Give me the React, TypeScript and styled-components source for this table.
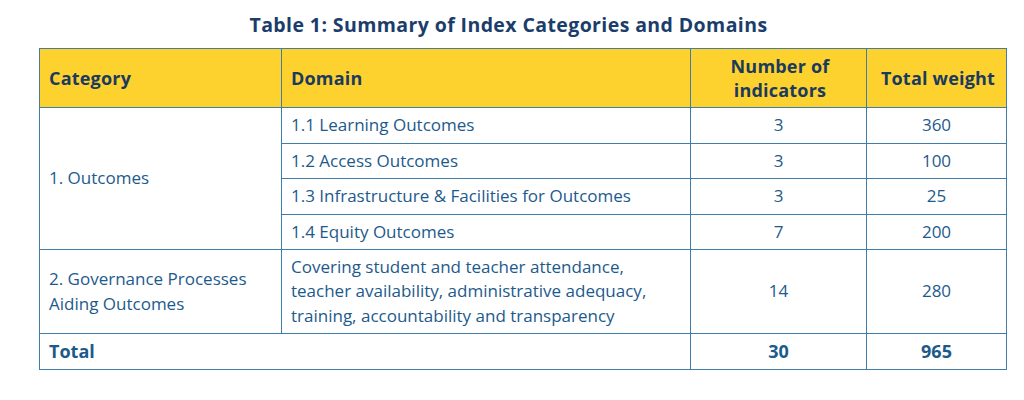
import styled, { createGlobalStyle } from "styled-components";

const GlobalStyle = createGlobalStyle`
  html, body {
    margin: 0;
    padding: 0;
    background: #ffffff;
  }
  body {
    font-family: "Open Sans", "Noto Sans", sans-serif;
  }
`;

const Page = styled.div`
  width: 1024px;
  height: 400px;
  padding: 12px 0 0 39px;
  box-sizing: border-box;
`;

const Caption = styled.div`
  width: 967px;
  padding-right: 28px;
  box-sizing: border-box;
  text-align: center;
  font-size: 19.5px;
  letter-spacing: 0.4px;
  font-weight: 700;
  color: #1b3d6b;
  line-height: 26px;
  height: 36px;
`;

const Table = styled.table`
  width: 967px;
  border-collapse: collapse;
  table-layout: fixed;
  color: #1d5a8c;
  font-size: 17px;
`;

const Head = styled.th<{ $center?: boolean }>`
  background: #fed22e;
  color: #1a3a5e;
  font-weight: 700;
  font-size: 18px;
  letter-spacing: 0.2px;
  line-height: 24px;
  height: 58px;
  padding: 0 6px 0 9px;
  white-space: nowrap;
  text-align: ${(p) => (p.$center ? "center" : "left")};
  vertical-align: middle;
  border: 1.5px solid #3f7dab;
`;

const Cell = styled.td<{ $center?: boolean; $bold?: boolean; $h?: number }>`
  height: ${(p) => p.$h ?? 34.5}px;
  padding: 0 9px;
  line-height: 24.5px;
  text-align: ${(p) => (p.$center ? "center" : "left")};
  font-weight: ${(p) => (p.$bold ? 700 : 400)};
  font-size: ${(p) => (p.$bold ? 18 : 17)}px;
  vertical-align: middle;
  border: 1.5px solid #3f7dab;
`;

const rows = [
  { domain: "1.1 Learning Outcomes", count: "3", weight: "360" },
  { domain: "1.2 Access Outcomes", count: "3", weight: "100" },
  { domain: "1.3 Infrastructure & Facilities for Outcomes", count: "3", weight: "25" },
  { domain: "1.4 Equity Outcomes", count: "7", weight: "200" },
];

export default function App() {
  return (
    <Page>
      <GlobalStyle />
      <Caption>Table 1: Summary of Index Categories and Domains</Caption>
      <Table>
        <colgroup>
          <col style={{ width: 242 }} />
          <col style={{ width: 409 }} />
          <col style={{ width: 176 }} />
          <col style={{ width: 140 }} />
        </colgroup>
        <thead>
          <tr>
            <Head>Category</Head>
            <Head>Domain</Head>
            <Head $center>
              Number of
              <br />
              indicators
            </Head>
            <Head $center>Total weight</Head>
          </tr>
        </thead>
        <tbody>
          {rows.map((r, i) => (
            <tr key={r.domain}>
              {i === 0 && <Cell rowSpan={4}>1. Outcomes</Cell>}
              <Cell>{r.domain}</Cell>
              <Cell $center>{r.count}</Cell>
              <Cell $center>{r.weight}</Cell>
            </tr>
          ))}
          <tr>
            <Cell $h={83}>
              2. Governance Processes
              <br />
              Aiding Outcomes
            </Cell>
            <Cell $h={83}>
              Covering student and teacher attendance,
              <br />
              teacher availability, administrative adequacy,
              <br />
              training, accountability and transparency
            </Cell>
            <Cell $center $h={83}>14</Cell>
            <Cell $center $h={83}>280</Cell>
          </tr>
          <tr>
            <Cell $bold colSpan={2}>Total</Cell>
            <Cell $bold $center>30</Cell>
            <Cell $bold $center>965</Cell>
          </tr>
        </tbody>
      </Table>
    </Page>
  );
}
